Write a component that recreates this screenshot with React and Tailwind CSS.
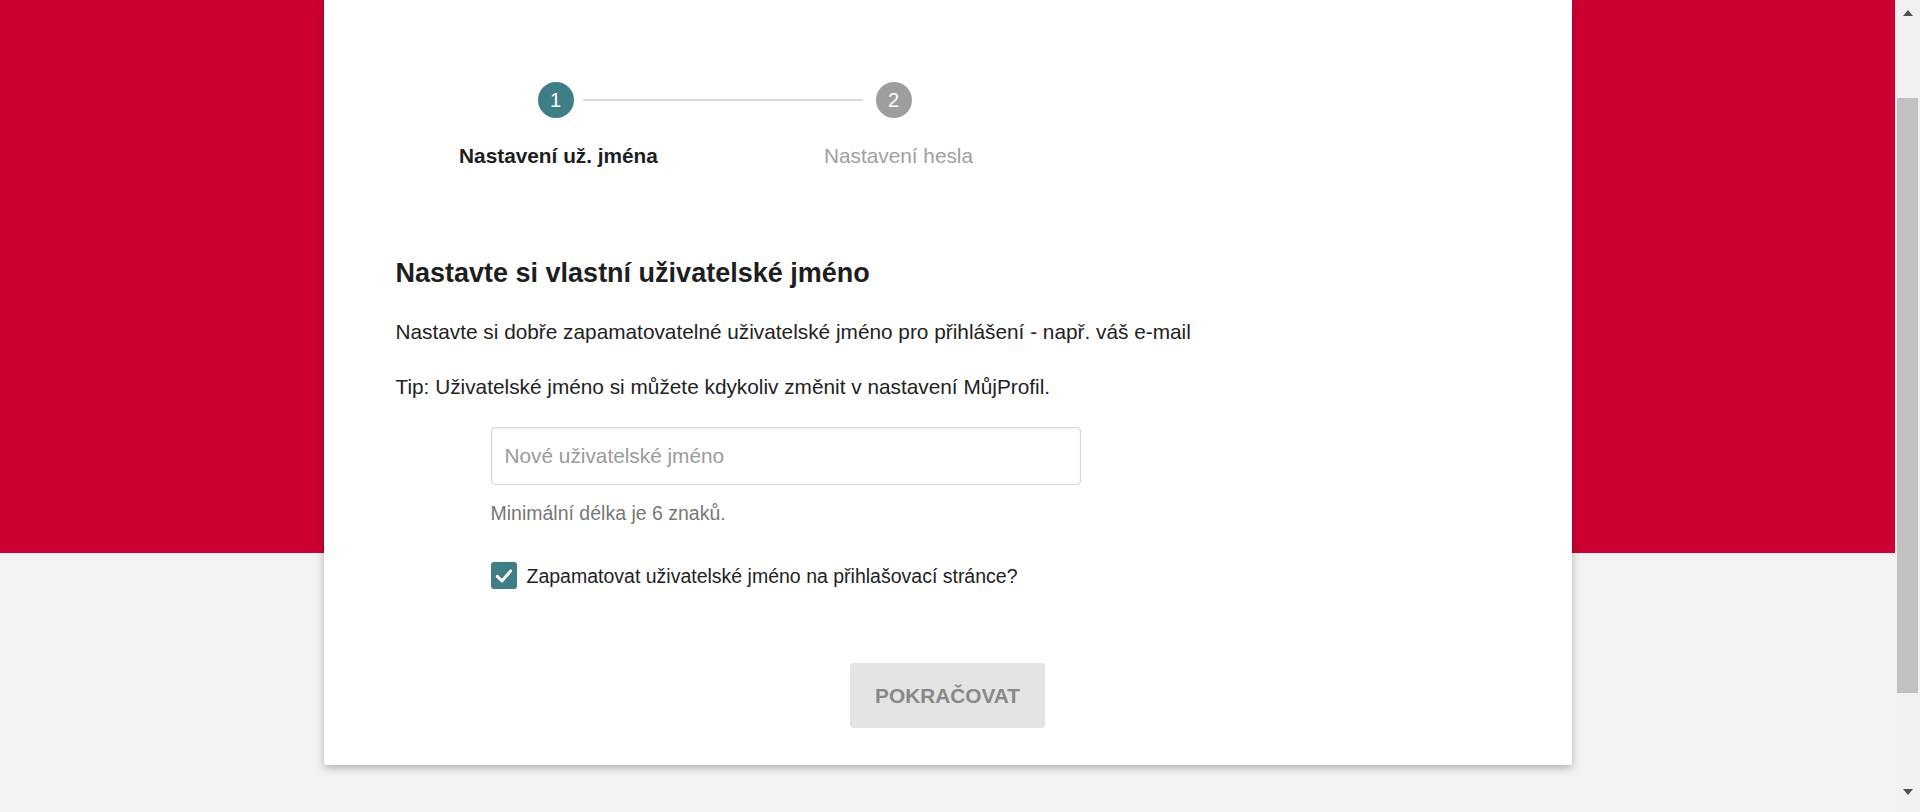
import React from "react";

const Step = ({ n, active }) => (
  <div
    className={`flex h-[36px] w-[36px] items-center justify-center rounded-full text-[20px] text-white ${
      active ? "bg-[#3e7e86]" : "bg-[#9e9e9e]"
    }`}
  >
    {n}
  </div>
);

const Scrollbar = () => (
  <div className="flex h-full w-[25px] shrink-0 flex-col bg-[#f1f1f1]">
    <div className="flex h-[25px] items-start justify-center pt-[10px]">
      <div className="h-0 w-0 border-x-[5.5px] border-b-[6px] border-x-transparent border-b-[#505050]" />
    </div>
    <div className="h-[73px]" />
    <div className="mx-[2px] h-[595px] bg-[#c1c1c1]" />
    <div className="flex-1" />
    <div className="flex h-[25px] items-start justify-center pt-[2px]">
      <div className="h-0 w-0 border-x-[5.5px] border-t-[6px] border-x-transparent border-t-[#505050]" />
    </div>
  </div>
);

export default function App() {
  return (
    <div className="flex h-[812px] w-full overflow-hidden font-['Liberation_Sans',Arial,sans-serif] text-[#222]">
      <main className="flex flex-1 justify-center bg-[linear-gradient(to_bottom,#cc0033_553px,#f3f3f3_553px)]">
        <div className="h-[765px] w-[1248px] rounded-b-[3px] bg-white px-[72px] pt-[82px] shadow-[0_3px_8px_rgba(0,0,0,0.28)]">
          {/* Stepper */}
          <div className="-mx-[72px] flex items-center pl-[214px]">
            <Step n="1" active />
            <div className="ml-[9px] h-[2px] w-[280px] bg-[#dadada]" />
            <div className="ml-[13px]">
              <Step n="2" />
            </div>
          </div>
          <div className="-mx-[72px] mt-[26px] flex pl-[65px] text-[20.8px] leading-[24px]">
            <div className="w-[340px] text-center font-bold text-[#1e1e1e]">Nastavení už. jména</div>
            <div className="w-[340px] text-center text-[#a0a0a0]">Nastavení hesla</div>
          </div>

          {/* Intro */}
          <h2 className="mt-[89px] text-[27px] font-bold leading-[32px] text-[#1e1e1e]">
            Nastavte si vlastní uživatelské jméno
          </h2>
          <p className="mt-[31px] text-[20.8px] leading-[24px]">
            Nastavte si dobře zapamatovatelné uživatelské jméno pro přihlášení - např. váš e-mail
          </p>
          <p className="mt-[31px] text-[20.8px] leading-[24px]">
            Tip: Uživatelské jméno si můžete kdykoliv změnit v nastavení MůjProfil.
          </p>

          {/* Form */}
          <div className="ml-[95px] mt-[28px] w-[590px]">
            <input
              type="text"
              placeholder="Nové uživatelské jméno"
              className="h-[58px] w-full rounded-[4px] border border-[#d6d6d6] bg-white px-[13px] text-[20.8px] shadow-[inset_0_1px_2px_rgba(0,0,0,0.06)] outline-none placeholder:text-[#9a9a9a]"
            />
            <p className="mt-[16px] text-[19.5px] leading-[24px] text-[#777]">
              Minimální délka je 6 znaků.
            </p>
            <label className="mt-[37px] flex items-center gap-[10px]">
              <span className="flex h-[27px] w-[26px] items-center justify-center rounded-[3px] bg-[#3e7e86]">
                <svg width="20" height="20" viewBox="0 0 24 24" fill="none" stroke="white" strokeWidth="3.6" strokeLinecap="round" strokeLinejoin="round">
                  <polyline points="4 12.5 9.5 18 20 6" />
                </svg>
              </span>
              <span className="text-[19.5px] leading-[24px]">
                Zapamatovat uživatelské jméno na přihlašovací stránce?
              </span>
            </label>
          </div>

          <div className="mt-[74px] flex justify-center">
            <button className="h-[65px] w-[195px] rounded-[3px] bg-[#e4e4e4] text-[20.8px] font-bold text-[#888]">
              POKRAČOVAT
            </button>
          </div>
        </div>
      </main>
      <Scrollbar />
    </div>
  );
}
